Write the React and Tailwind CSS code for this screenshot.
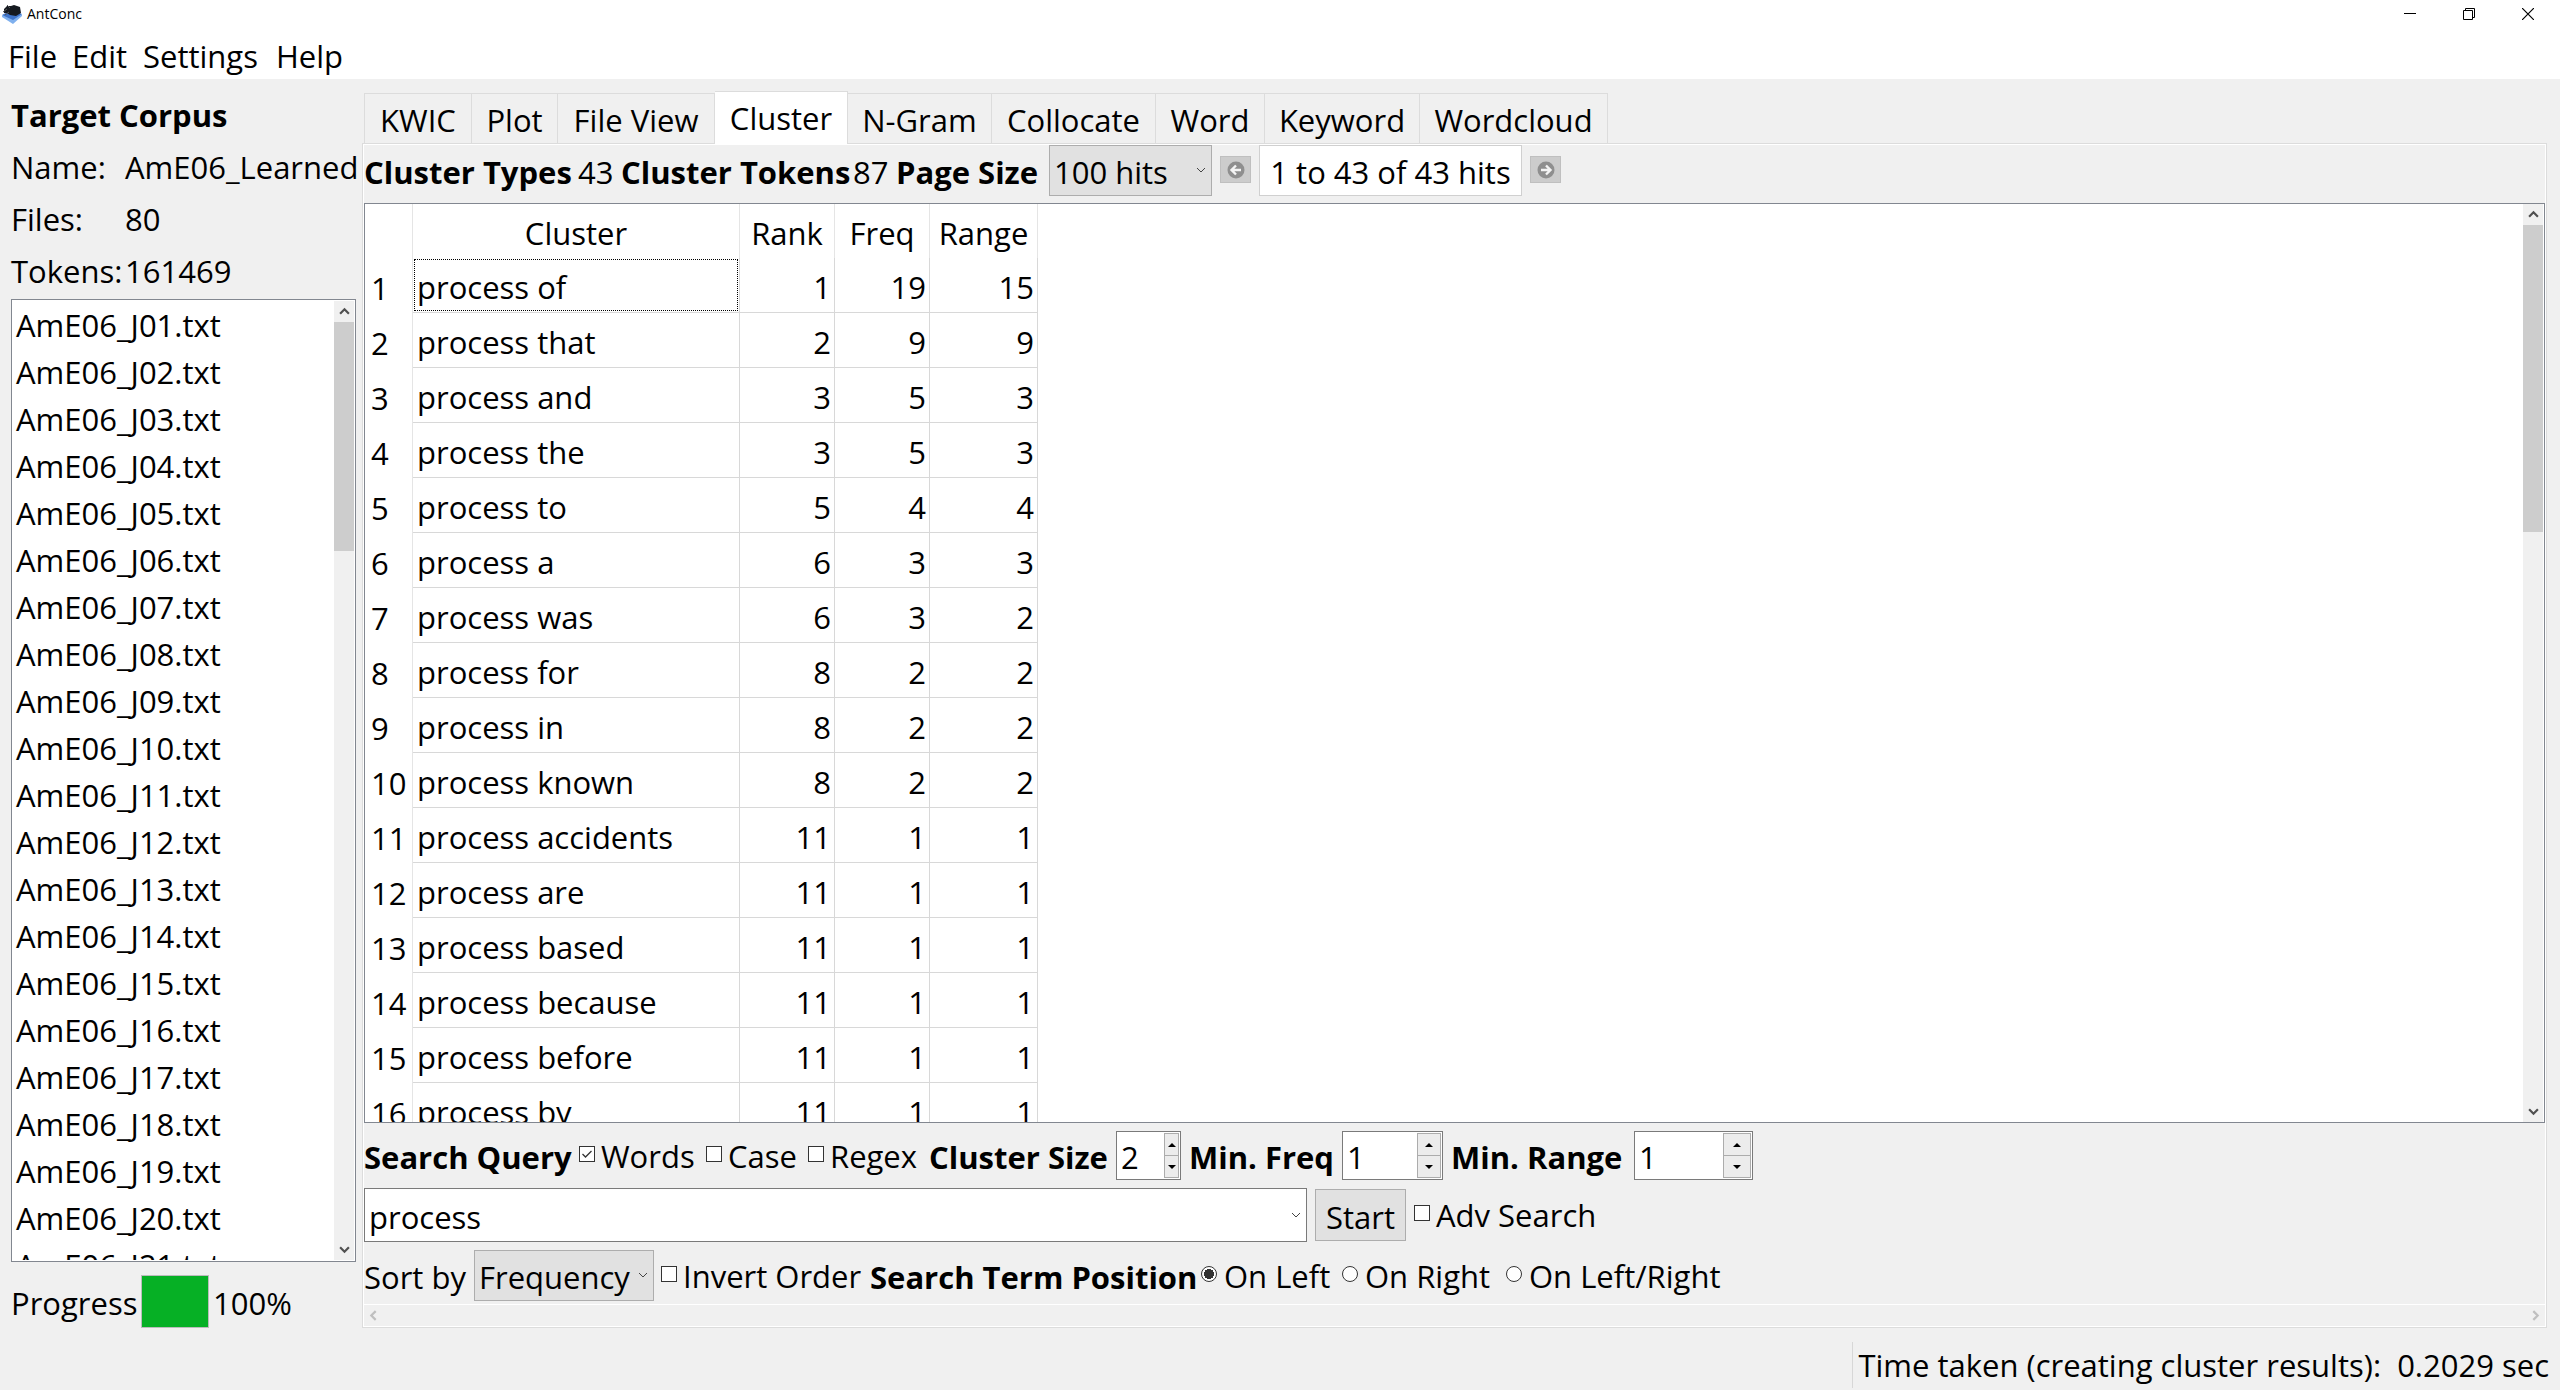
/**
 * AntConc main window, cluster tool tab
 */

import React, { memo } from 'react';

const FILES = Array.from({ length: 21 }, (_, i) => `AmE06_J${String(i + 1).padStart(2, '0')}.txt`);

const CLUSTERS = [
    ['process of', 1, 19, 15],
    ['process that', 2, 9, 9],
    ['process and', 3, 5, 3],
    ['process the', 3, 5, 3],
    ['process to', 5, 4, 4],
    ['process a', 6, 3, 3],
    ['process was', 6, 3, 2],
    ['process for', 8, 2, 2],
    ['process in', 8, 2, 2],
    ['process known', 8, 2, 2],
    ['process accidents', 11, 1, 1],
    ['process are', 11, 1, 1],
    ['process based', 11, 1, 1],
    ['process because', 11, 1, 1],
    ['process before', 11, 1, 1],
    ['process by', 11, 1, 1],
];

const TABS = [
    { name: 'KWIC', width: 'w-[108px]' },
    { name: 'Plot', width: 'w-[86px]' },
    { name: 'File View', width: 'w-[157px]' },
    { name: 'Cluster', width: 'w-[133px]', active: true },
    { name: 'N-Gram', width: 'w-[144px]' },
    { name: 'Collocate', width: 'w-[164px]' },
    { name: 'Word', width: 'w-[109px]' },
    { name: 'Keyword', width: 'w-[155px]' },
    { name: 'Wordcloud', width: 'w-[188px]' },
];

const Chevron = ({ className = '', points = '1,3 5,7 9,3', stroke = 1 }) => (
    <svg viewBox="0 0 10 10" className={className} fill="none" stroke="currentColor" strokeWidth={stroke}>
        <polyline points={points} />
    </svg>
);

const VerticalScrollbar = ({ thumb }) => (
    <div className="flex w-5 shrink-0 flex-col items-center bg-[#f0f0f0] text-[#505050]">
        <Chevron className="my-[5px] size-[11px] shrink-0" points="1,7 5,3 9,7" stroke={2} />
        <div className="w-full flex-1">
            <div className={`w-full bg-[#cdcdcd] ${thumb}`} />
        </div>
        <Chevron className="my-[5px] size-[11px] shrink-0" stroke={2} />
    </div>
);

const CheckBox = ({ id, label, checked, width }) => (
    <div className={`flex items-center gap-[6px] ${width}`}>
        <span className="relative mb-1 flex size-4 shrink-0">
            <input id={id} type="checkbox" defaultChecked={checked} className="peer size-4 appearance-none border border-[#333] bg-white" />
            <svg viewBox="0 0 16 16" className="pointer-events-none absolute inset-0 hidden size-4 peer-checked:block" fill="none" stroke="#333" strokeWidth="1.3">
                <polyline points="3.5,8 6.5,11 12.5,5" />
            </svg>
        </span>
        <label htmlFor={id} className="whitespace-nowrap">{label}</label>
    </div>
);

const Radio = ({ id, label, checked, width }) => (
    <div className={`flex items-center gap-[7px] ${width}`}>
        <input
            id={id}
            type="radio"
            name="position"
            defaultChecked={checked}
            className="mb-1 size-4 shrink-0 appearance-none rounded-full border border-[#333] bg-white checked:bg-[radial-gradient(circle,#333_0_5px,#fff_5px)]"
        />
        <label htmlFor={id} className="whitespace-nowrap">{label}</label>
    </div>
);

const Select = ({ id, value, width }) => (
    <div className={`relative h-[51px] shrink-0 ${width}`}>
        <select id={id} defaultValue={value} className="size-full appearance-none border border-[#adadad] bg-[#e1e1e1] pl-1 pt-[2px]">
            <option>{value}</option>
        </select>
        <Chevron className="pointer-events-none absolute right-[6px] top-5 size-[10px] text-[#444]" />
    </div>
);

const SpinBox = ({ id, value, width, buttons }) => (
    <div className={`flex h-[49px] shrink-0 border border-[#7a7a7a] bg-white ${width}`}>
        <input id={id} type="text" defaultValue={value} className="min-w-0 flex-1 bg-transparent pl-1 pt-[2px] outline-none" />
        <div className={`m-px flex flex-col ${buttons}`}>
            <button type="button" aria-label="Increase" className="flex flex-1 items-center justify-center border border-[#acacac] bg-[#ececec]">
                <svg viewBox="0 0 8 4" className="h-1 w-2"><polygon points="4,0 8,4 0,4" /></svg>
            </button>
            <button type="button" aria-label="Decrease" className="flex flex-1 items-center justify-center border border-t-0 border-[#acacac] bg-[#ececec]">
                <svg viewBox="0 0 8 4" className="h-1 w-2"><polygon points="0,0 8,0 4,4" /></svg>
            </button>
        </div>
    </div>
);

const PageButton = ({ label, path }) => (
    <button type="button" aria-label={label} className="mb-[2px] flex h-[27px] w-[31px] shrink-0 items-center justify-center border border-[#bfbfbf] bg-[#cccccc]">
        <svg viewBox="0 0 18 18" className="size-[18px]">
            <circle cx="9" cy="9" r="8.5" fill="#8f8f8f" />
            <path d={path} fill="none" stroke="#f4f4f4" strokeWidth="2.4" />
        </svg>
    </button>
);

const TitleBar = () => (
    <header className="flex h-[31px] items-start justify-between bg-white">
        <div className="flex h-7 items-center gap-[5px] pl-[2px]">
            <svg viewBox="0 0 20 20" className="size-5">
                <path d="M0 11 L9 6 L20 10 L11 19 Z" fill="#3f74c9" />
                <path d="M0 11 L11 16 L20 10 V12 L11 20 L0 13 Z" fill="#7fb0ee" />
                <path d="M2 5 L5 2 L9 2 L12 1 L18 3 L19 9 L14 12 L8 11 L5 9 L2 9 Z" fill="#161a20" />
                <path d="M1 8 L5 5 M3 11 L7 8 M5 1 L8 4" stroke="#555" strokeWidth="1" />
            </svg>
            <h1 className="text-[14px] leading-7">AntConc</h1>
        </div>
        <div className="flex h-7 items-center gap-[47px] pr-[26px]">
            <button type="button" aria-label="Minimize" className="size-3">
                <svg viewBox="0 0 12 12" className="size-3"><path d="M0 5.5 H12" stroke="#000" /></svg>
            </button>
            <button type="button" aria-label="Restore" className="size-3">
                <svg viewBox="0 0 12 12" className="size-3" fill="none" stroke="#000">
                    <path d="M0.5 2.5 H9.5 V11.5 H0.5 Z M2.5 2.5 V0.5 H11.5 V9.5 H9.5" />
                </svg>
            </button>
            <button type="button" aria-label="Close" className="size-3">
                <svg viewBox="0 0 12 12" className="size-3"><path d="M0 0 L12 12 M12 0 L0 12" stroke="#000" strokeWidth="1.2" /></svg>
            </button>
        </div>
    </header>
);

const MenuBar = () => (
    <nav className="flex h-12 items-start bg-white pl-2 leading-[50px]">
        <button type="button" className="w-16 text-left">File</button>
        <button type="button" className="w-[71px] text-left">Edit</button>
        <button type="button" className="w-[133px] text-left">Settings</button>
        <button type="button" className="text-left">Help</button>
    </nav>
);

const CorpusPanel = memo(() => (
    <aside className="flex w-[345px] shrink-0 flex-col pt-[10px]">
        <h2 className="h-[52px] font-bold leading-[52px]">Target Corpus</h2>
        <dl className="grid grid-cols-[114px_1fr] whitespace-nowrap leading-[52px]">
            <dt>Name:</dt>
            <dd>AmE06_Learned</dd>
            <dt>Files:</dt>
            <dd>80</dd>
            <dt>Tokens:</dt>
            <dd>161469</dd>
        </dl>
        <div className="mt-[2px] flex min-h-0 flex-1 border border-[#828790] bg-white p-px">
            <ul className="min-w-0 flex-1 overflow-hidden pl-[3px] pt-px leading-[47px]">
                {FILES.map((file) => (
                    <li key={file}>{file}</li>
                ))}
            </ul>
            <VerticalScrollbar thumb="h-[25%]" />
        </div>
        <div className="mt-[13px] flex h-[53px] items-center">
            <span className="w-[130px] pt-[2px]">Progress</span>
            <div role="progressbar" aria-label="Progress" aria-valuenow={100} className="h-full w-[68px] border border-[#bcbcbc] bg-[#06b025]" />
            <span className="pl-1 pt-[2px]">100%</span>
        </div>
    </aside>
));

const ClusterTable = () => (
    <div className="mt-[7px] flex min-h-0 flex-1 border border-[#828790] bg-white pr-px">
        <div className="min-w-0 flex-1 overflow-hidden">
            <table className="w-[673px] table-fixed border-separate border-spacing-0">
                <colgroup>
                    <col className="w-[48px]" />
                    <col className="w-[327px]" />
                    <col className="w-[95px]" />
                    <col className="w-[95px]" />
                    <col className="w-[108px]" />
                </colgroup>
                <thead>
                    <tr className="h-[54px]">
                        <th className="border-r border-[#e5e5e5] p-0" aria-label="Row" />
                        {['Cluster', 'Rank', 'Freq', 'Range'].map((name) => (
                            <th key={name} scope="col" className="border-r border-[#e5e5e5] p-0 pt-1 font-normal">{name}</th>
                        ))}
                    </tr>
                </thead>
                <tbody>
                    {CLUSTERS.map(([cluster, ...values], i) => (
                        <tr key={cluster} className="h-[55px]">
                            <th scope="row" className="border-r border-[#e5e5e5] p-0 pl-[6px] pt-1 text-left font-normal">{i + 1}</th>
                            <td className="border-b border-r border-[#d8d8d8] p-px">
                                <div className={`h-[52px] border pl-[2px] leading-[54px] ${i === 0 ? 'border-dotted border-black' : 'border-transparent'}`}>{cluster}</div>
                            </td>
                            {values.map((value, col) => (
                                <td key={col} className="border-b border-r border-[#d8d8d8] p-0 pr-[3px] pt-1 text-right">{value}</td>
                            ))}
                        </tr>
                    ))}
                </tbody>
            </table>
        </div>
        <VerticalScrollbar thumb="h-[35%]" />
    </div>
);

const ClusterTool = memo(() => (
    <section className="flex min-h-0 flex-1 flex-col border border-[#dcdcdc] bg-[#f0f0f0] outline-1 -outline-offset-2 outline-white">
        <div className="flex min-h-0 flex-1 flex-col px-px pt-px">
            <div className="flex items-center whitespace-nowrap">
                <span className="w-[214px] pt-[2px] font-bold">Cluster Types</span>
                <output className="w-[43px] pt-[2px]">43</output>
                <span className="w-[232px] pt-[2px] font-bold">Cluster Tokens</span>
                <output className="w-[43px] pt-[2px]">87</output>
                <label htmlFor="page-size" className="w-[153px] pt-[2px] font-bold">Page Size</label>
                <Select id="page-size" value="100 hits" width="w-[163px]" />
                <div className="flex items-center gap-2 pl-2">
                    <PageButton label="Previous page" path="M14 9 H5 M9 4.5 L4.5 9 L9 13.5" />
                    <input aria-label="Page" type="text" readOnly value="1 to 43 of 43 hits" className="h-[51px] w-[263px] border border-[#d0d0d0] bg-white pt-[2px] text-center" />
                    <PageButton label="Next page" path="M4 9 H13 M9 4.5 L13.5 9 L9 13.5" />
                </div>
            </div>

            <ClusterTable />

            <div className="mt-2 flex h-[49px] items-center whitespace-nowrap">
                <span className="w-[215px] pt-[2px] font-bold">Search Query</span>
                <CheckBox id="words" label="Words" width="w-[127px]" checked />
                <CheckBox id="case" label="Case" width="w-[102px]" />
                <CheckBox id="regex" label="Regex" width="w-[121px]" />
                <label htmlFor="cluster-size" className="w-[187px] pt-[2px] font-bold">Cluster Size</label>
                <SpinBox id="cluster-size" value="2" width="w-[65px]" buttons="w-[15px]" />
                <label htmlFor="min-freq" className="w-[161px] pl-2 pt-[2px] font-bold">Min. Freq</label>
                <SpinBox id="min-freq" value="1" width="w-[101px]" buttons="w-[24px]" />
                <label htmlFor="min-range" className="w-[191px] pl-2 pt-[2px] font-bold">Min. Range</label>
                <SpinBox id="min-range" value="1" width="w-[119px]" buttons="w-[28px]" />
            </div>

            <div className="mt-2 flex h-[54px] items-center whitespace-nowrap">
                <div className="relative h-full w-[943px]">
                    <input aria-label="Search term" type="text" defaultValue="process" className="size-full border border-[#7a7a7a] bg-white pl-1 pt-1 outline-none" />
                    <Chevron className="pointer-events-none absolute right-[6px] top-[22px] size-[10px] text-[#444]" />
                </div>
                <button type="button" className="mx-2 h-[52px] w-[91px] border border-[#adadad] bg-[#e1e1e1] pt-1">Start</button>
                <CheckBox id="adv" label="Adv Search" width="w-[200px]" />
            </div>

            <div className="mt-2 flex h-[51px] items-center whitespace-nowrap">
                <label htmlFor="sort" className="w-[110px] pt-[2px]">Sort by</label>
                <Select id="sort" value="Frequency" width="w-[180px]" />
                <div className="flex items-center pl-[7px]">
                    <CheckBox id="invert" label="Invert Order" width="w-[209px]" />
                    <span className="w-[331px] pt-[2px] font-bold">Search Term Position</span>
                    <Radio id="left" label="On Left" width="w-[141px]" checked />
                    <Radio id="right" label="On Right" width="w-[164px]" />
                    <Radio id="both" label="On Left/Right" width="w-[230px]" />
                </div>
            </div>

            <div className="mt-[3px] flex h-[23px] items-center justify-between border-t border-white px-1 pb-[2px] text-[#bfbfbf]">
                <Chevron className="size-[11px]" points="7,1 3,5 7,9" stroke={2} />
                <Chevron className="size-[11px]" points="3,1 7,5 3,9" stroke={2} />
            </div>
        </div>
    </section>
));

export default function App() {
    return (
        <div className="flex h-screen min-w-0 flex-col overflow-hidden bg-[#f0f0f0] font-['Open_Sans','Noto_Sans',sans-serif] text-[31px] leading-[46px] text-black">
            <TitleBar />
            <MenuBar />
            <main className="flex min-h-0 flex-1 gap-[6px] pl-[11px] pr-[13px]">
                <CorpusPanel />
                <div className="flex min-w-0 flex-1 flex-col pt-3">
                    <div role="tablist" className="flex h-[52px] items-end pl-[2px]">
                        {TABS.map((tab, i) => (
                            <button
                                key={tab.name}
                                type="button"
                                role="tab"
                                aria-selected={Boolean(tab.active)}
                                className={`shrink-0 whitespace-nowrap border-r border-t border-[#dcdcdc] ${tab.width} ${i === 0 ? 'border-l' : ''} ${tab.active ? 'z-10 -mb-px h-[53px] bg-white' : 'h-[50px] pt-[2px]'}`}
                            >
                                {tab.name}
                            </button>
                        ))}
                    </div>
                    <ClusterTool />
                </div>
            </main>
            <footer className="flex h-[62px] items-center justify-end pr-[11px] pt-3">
                <div className="h-[46px] whitespace-pre border-l border-[#d7d7d7] pl-[5px]">{'Time taken (creating cluster results):  0.2029 sec'}</div>
            </footer>
        </div>
    );
}
